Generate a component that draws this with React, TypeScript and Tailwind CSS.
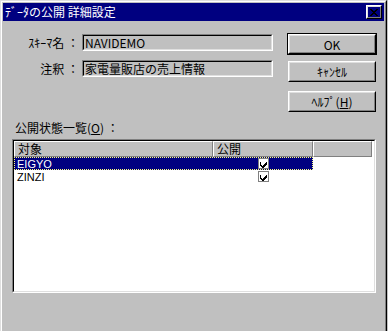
import type { ReactNode } from 'react'

const font = "font-[family-name:'Noto_Sans_CJK_JP','Noto_Sans_CJK_SC',sans-serif]"

function Raised({ children, className = '' }: { children: ReactNode; className?: string }) {
  return (
    <div className={`border border-t-white border-l-white border-r-black border-b-black ${className}`}>
      <div className="h-full border border-t-[#dfdfdf] border-l-[#dfdfdf] border-r-[#808080] border-b-[#808080] flex items-center justify-center text-[12px] leading-[13px]">
        {children}
      </div>
    </div>
  )
}

function Button({ children, def }: { children: ReactNode; def?: boolean }) {
  if (def) {
    return (
      <div className="border border-black w-[90px] h-[22px]">
        <Raised className="h-full">{children}</Raised>
      </div>
    )
  }
  return <Raised className="w-[88px] h-[21px]">{children}</Raised>
}

function Field({ value }: { value: string }) {
  return (
    <div className="w-[191px] h-[17px] border border-t-[#808080] border-l-[#808080] border-r-white border-b-white">
      <div className="h-full border border-t-black border-l-black border-r-[#dfdfdf] border-b-[#dfdfdf] bg-[#c0c0c0] pl-[1px] text-[12px] leading-[13px] whitespace-nowrap overflow-hidden">
        {value}
      </div>
    </div>
  )
}

function Check() {
  return (
    <div className="w-[11px] h-[11px] border border-[#808080] bg-white flex items-center justify-center">
      <svg width="9" height="9" viewBox="0 0 9 9" shapeRendering="crispEdges">
        <path d="M1 3h1v3h1v1h1v-1h1v-1h1v-1h1v-1h1v3h-1v1h-1v1h-1v1h-2v-1h-1v-1h-1z" fill="#000" />
      </svg>
    </div>
  )
}

function HeaderCell({ children, w }: { children?: ReactNode; w: string }) {
  return (
    <div className={`${w} h-[16px] border border-t-white border-l-white border-r-[#808080] border-b-[#808080] bg-[#c0c0c0] pl-[3px] text-[12px] leading-[14px] whitespace-nowrap`}>
      {children}
    </div>
  )
}

const rows = [
  { name: 'EIGYO', on: true, selected: true },
  { name: 'ZINZI', on: true, selected: false },
]

export default function App() {
  return (
    <div className={`w-[388px] h-[331px] overflow-hidden bg-[#c0c0c0] text-black ${font}`}>
      <div className="w-[387px] h-[340px] border border-t-[#dfdfdf] border-l-[#dfdfdf] border-r-black border-b-black">
        <div className="h-full border border-t-white border-l-white border-r-[#808080] border-b-[#808080] p-[1px]">
          {/* title bar */}
          <div className="h-[18px] bg-[#000080] flex items-center justify-between pl-[2px] pr-[2px]">
            <span className="text-white text-[12px] leading-[14px] whitespace-nowrap">ﾃﾞｰﾀの公開 詳細設定</span>
            <Raised className="w-[16px] h-[14px]">
              <svg width="8" height="7" viewBox="0 0 8 7" shapeRendering="crispEdges">
                <path d="M0 0h2v1h1v1h2v-1h1v-1h2v1h-1v1h-1v1h-1v1h1v1h1v1h1v1h-2v-1h-1v-1h-2v1h-1v1h-2v-1h1v-1h1v-1h1v-1h-1v-1h-1v-1h-1z" fill="#000" />
              </svg>
            </Raised>
          </div>

          {/* body */}
          <div className="pt-[12px]">
            <div className="flex items-start">
              <div className="mt-[1px] flex flex-col gap-[9px] text-[12px] leading-[13px]">
                <div className="flex items-center">
                  <div className="w-[76px] text-right whitespace-nowrap">ｽｷｰﾏ名 ：</div>
                  <div className="ml-[3px]">
                    <Field value="NAVIDEMO" />
                  </div>
                </div>
                <div className="flex items-center">
                  <div className="w-[76px] text-right whitespace-nowrap">注釈 ：</div>
                  <div className="ml-[3px]">
                    <Field value="家電量販店の売上情報" />
                  </div>
                </div>
              </div>
              <div className="ml-[14px] w-[90px] flex flex-col items-center">
                <Button def>OK</Button>
                <div className="mt-[6px]">
                  <Button>ｷｬﾝｾﾙ</Button>
                </div>
                <div className="mt-[9px]">
                  <Button>
                    ﾍﾙﾌﾟ(<span className="underline underline-offset-1">H</span>)
                  </Button>
                </div>
              </div>
            </div>

            <div className="mt-[8px] ml-[12px] text-[12px] leading-[16px] whitespace-nowrap">
              公開状態一覧(<span className="underline underline-offset-1">O</span>) ：
            </div>

            {/* list */}
            <div className="mt-[3px] ml-[9px] w-[364px] h-[154px] border border-t-[#808080] border-l-[#808080] border-r-white border-b-white">
              <div className="h-full border border-t-black border-l-black border-r-[#dfdfdf] border-b-[#dfdfdf] bg-white">
                <div className="flex">
                  <HeaderCell w="w-[199px]">対象</HeaderCell>
                  <HeaderCell w="w-[100px]">公開</HeaderCell>
                  <HeaderCell w="w-[59px]" />
                </div>
                {rows.map((r) => (
                  <div key={r.name} className="flex h-[13px]">
                    <div
                      className={`w-[299px] h-[13px] flex items-center ${
                        r.selected
                          ? 'bg-[#000080] text-white outline-1 outline-dotted -outline-offset-1 outline-[#ffff80]'
                          : ''
                      }`}
                    >
                      <div className="w-[199px] pl-[3px] whitespace-nowrap font-['Liberation_Sans',sans-serif] text-[11px] leading-[12px]">
                        {r.name}
                      </div>
                      <div className="w-[100px] flex justify-center pl-[1px]">{r.on && <Check />}</div>
                    </div>
                  </div>
                ))}
              </div>
            </div>
          </div>
        </div>
      </div>
    </div>
  )
}
